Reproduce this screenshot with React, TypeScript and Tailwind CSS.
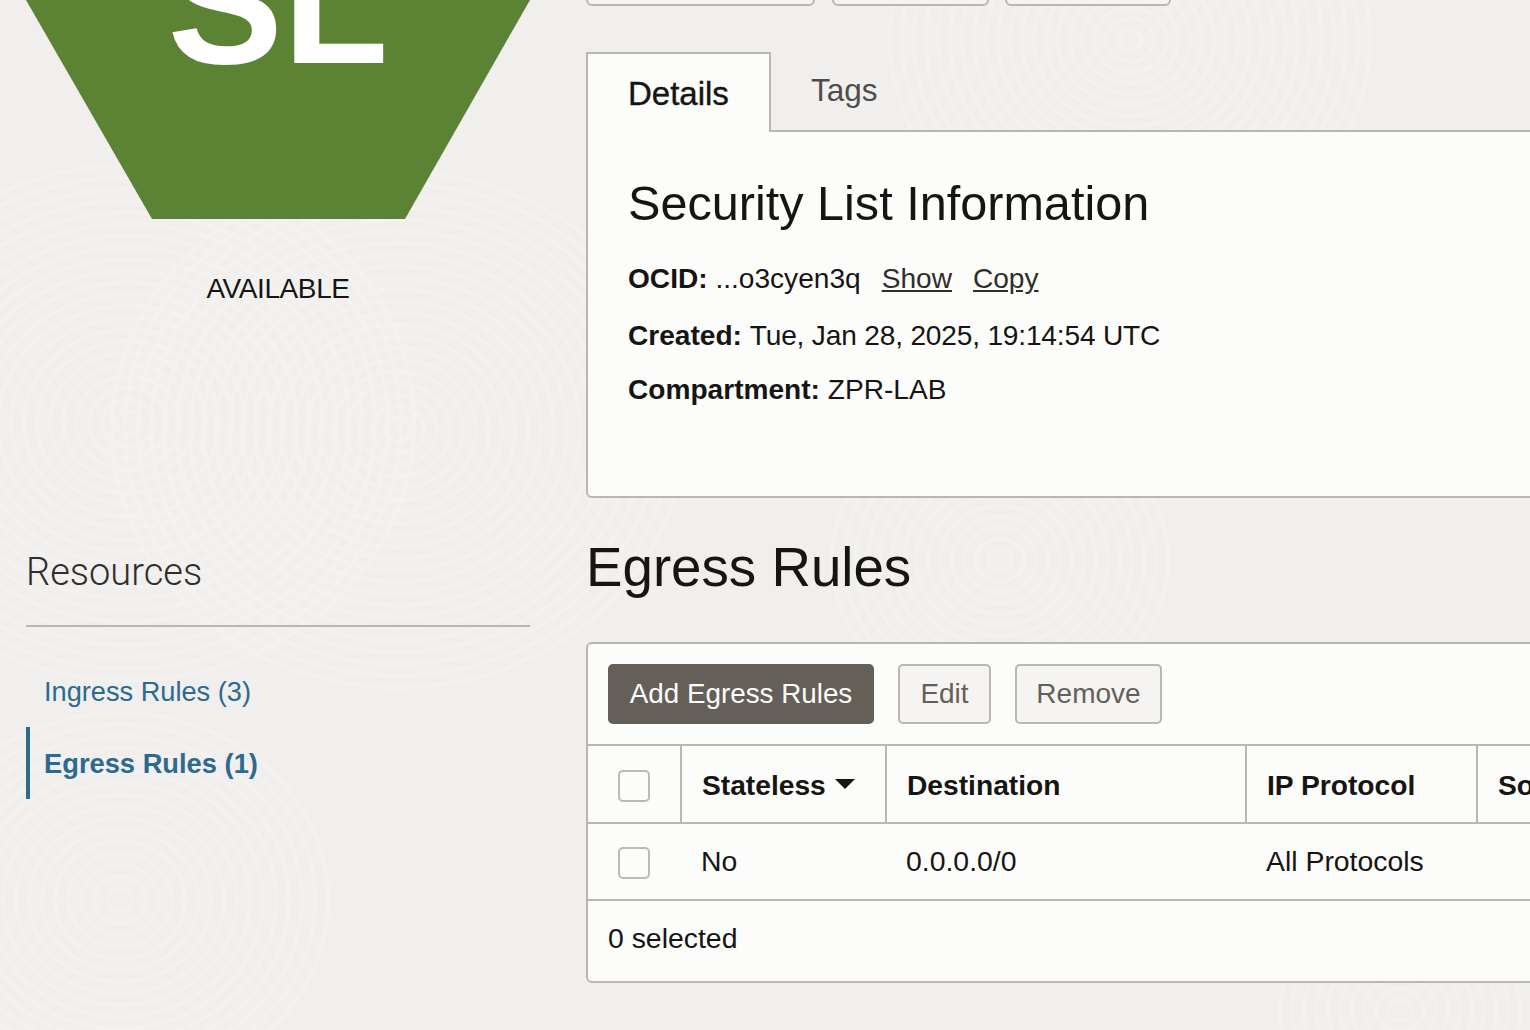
const font = "font-['Liberation_Sans',Arial,sans-serif]";

// faint fingerprint swirls behind the page
const swirls = [
  { cx: 128, cy: 423, count: 22, gap: 13 },
  { cx: 398, cy: 430, count: 22, gap: 13 },
  { cx: 120, cy: 900, count: 16, gap: 13 },
  { cx: 1130, cy: 40, count: 20, gap: 12 },
  { cx: 1000, cy: 560, count: 14, gap: 12 },
  { cx: 1400, cy: 1010, count: 10, gap: 12 },
];

const Texture = () => (
  <svg className="absolute inset-0 w-full h-full" viewBox="0 0 1530 1030" fill="none" stroke="#f3f2f0" strokeWidth={4}>
    {swirls.map((s) => Array.from({ length: s.count }, (_, i) => (
      <ellipse key={`${s.cx}-${i}`} cx={s.cx} cy={s.cy} rx={(i + 1) * s.gap} ry={(i + 1) * s.gap * 0.9} />
    )))}
  </svg>
);

const Checkbox = () => (
  <div className="w-[32px] h-[32px] rounded-[5px] border-2 border-[#bdb9b3] bg-[#fcfcfb]" />
);

const SideColumn = () => (
  <aside className="w-[504px] ml-[26px] shrink-0">
    <svg width="504" height="219" viewBox="0 0 504 219" className="block">
      <polygon points="0,0 504,0 379,219 126,219" fill="#5c8233" />
      <text x="252" y="63" textAnchor="middle" fill="#ffffff" fontSize="173" fontWeight="700" fontFamily="Liberation Sans, Arial, sans-serif">SL</text>
    </svg>
    <div className="mt-[53px] text-center text-[28px] leading-[34px] tracking-[-0.4px] text-[#161513]">AVAILABLE</div>
    <h2 className="mt-[242px] font-['Roboto',sans-serif] text-[38px] leading-[48px] font-light text-[#312d2a] border-b-2 border-[#bcb6b1] pb-[29px]">Resources</h2>
    <nav className="mt-[29px] text-[27.3px]">
      <div className="h-[71px] pl-[18px] pt-[2px] flex items-center text-[27.2px] text-[#2c6a8f]">Ingress Rules (3)</div>
      <div className="h-[72px] pl-[14px] pt-[2px] flex items-center border-l-4 border-[#2c6a8f] font-bold text-[#2c6a8f]">Egress Rules (1)</div>
    </nav>
  </aside>
);

const Field = ({ label, value, tight, children }: { label: string; value: string; tight?: boolean; children?: React.ReactNode }) => (
  <div className="text-[28.1px] leading-[34px] text-[#161513] whitespace-nowrap">
    <b>{label}</b> <span className={tight ? "tracking-[-0.18px]" : ""}>{value}</span>{children}
  </div>
);

const DetailsPanel = () => (
  <div className="bg-[#fcfcfb] border-2 border-t-0 border-[#bcb6b1] rounded-b-[6px] h-[366px] px-[40px] pt-[41px]">
    <h2 className="text-[48.6px] leading-[60px] text-[#161513]">Security List Information</h2>
    <div className="mt-[29px]">
      <Field label="OCID:" value="...o3cyen3q">
        <a className="ml-[21px] underline text-[#312d2a]">Show</a>
        <a className="ml-[21px] underline text-[#312d2a]">Copy</a>
      </Field>
    </div>
    <div className="mt-[23px]"><Field label="Created:" value="Tue, Jan 28, 2025, 19:14:54 UTC" tight /></div>
    <div className="mt-[20px]"><Field label="Compartment:" value="ZPR-LAB" /></div>
  </div>
);

const columns = [
  { name: "Stateless", width: "w-[205px]", sorted: true },
  { name: "Destination", width: "w-[360px]" },
  { name: "IP Protocol", width: "w-[231px]" },
  { name: "Source Port Range", width: "w-[300px]" },
];

const RulesTable = () => (
  <table className="table-fixed border-collapse w-[1190px] text-[28.4px] text-[#161513]">
    <thead>
      <tr className="h-[78px] border-y-2 border-[#bcb6b1]">
        <th className="w-[93px] border-r-2 border-[#bcb6b1] pl-[30px] pt-[4px] text-left"><Checkbox /></th>
        {columns.map((col) => (
          <th key={col.name} className={`${col.width} border-r-2 border-[#bcb6b1] pl-[20px] pt-[2px] text-left text-[28.2px] font-bold whitespace-nowrap overflow-hidden`}>
            {col.name}
            {col.sorted && <span className="inline-block ml-[9px] mb-[6px] w-0 h-0 border-x-[10px] border-x-transparent border-t-[10px] border-t-[#161513] align-middle" />}
          </th>
        ))}
      </tr>
    </thead>
    <tbody>
      <tr className="h-[77px] border-b-2 border-[#bcb6b1]">
        <td className="pl-[30px] pt-[2px]"><Checkbox /></td>
        <td className="pl-[20px]">No</td>
        <td className="pl-[20px]">0.0.0.0/0</td>
        <td className="pl-[20px]">All Protocols</td>
        <td className="pl-[20px]" />
      </tr>
    </tbody>
  </table>
);

const MainColumn = () => (
  <main className="ml-[56px] w-[1200px] shrink-0">
    <div className="flex -mt-[30px] h-[36px]">
      <div className="w-[229px] h-[36px] rounded-[6px] border-2 border-[#bcb6b1] bg-[#f5f4f2]" />
      <div className="ml-[17px] w-[157px] h-[36px] rounded-[6px] border-2 border-[#bcb6b1] bg-[#f5f4f2]" />
      <div className="ml-[16px] w-[166px] h-[36px] rounded-[6px] border-2 border-[#bcb6b1] bg-[#f5f4f2]" />
    </div>

    <div className="mt-[46px] flex h-[80px] border-b-2 border-[#bcb6b1] text-[#161513]">
      <div className="-mb-[2px] w-[185px] h-[80px] bg-[#fcfcfb] border-2 border-b-0 border-[#bcb6b1] flex items-center pl-[40px] pt-[2px] text-[33px] [-webkit-text-stroke:0.4px_#161513]">Details</div>
      <div className="pl-[40px] flex items-center text-[31.5px] text-[#4f4c49]">Tags</div>
    </div>
    <DetailsPanel />

    <h2 className="mt-[35px] text-[54.7px] leading-[68px] text-[#161513]">Egress Rules</h2>

    <section className="mt-[41px] h-[341px] bg-[#fcfcfb] border-2 border-[#bcb6b1] rounded-[6px]">
      <div className="h-[100px] pl-[20px] pt-[20px] flex gap-[24px] text-[28px] leading-[60px]">
        <button className="h-[60px] w-[266px] rounded-[5px] bg-[#655f5a] text-[#fcfcfb] text-center text-[27.8px]">Add Egress Rules</button>
        <button className="h-[60px] w-[93px] rounded-[5px] border-2 border-[#bcb6b1] bg-[#f5f4f2] text-[#655f5a] leading-[56px]">Edit</button>
        <button className="h-[60px] w-[147px] rounded-[5px] border-2 border-[#bcb6b1] bg-[#f5f4f2] text-[#655f5a] leading-[56px]">Remove</button>
      </div>
      <RulesTable />
      <div className="pl-[20px] pt-[19px] text-[28.4px] leading-[36px] text-[#161513]">0 selected</div>
    </section>
  </main>
);

const App = () => (
  <div className={`relative w-[1530px] h-[1030px] overflow-hidden bg-[#f1efed] ${font}`}>
    <Texture />
    <div className="relative flex">
      <SideColumn />
      <MainColumn />
    </div>
  </div>
);

export default App;
